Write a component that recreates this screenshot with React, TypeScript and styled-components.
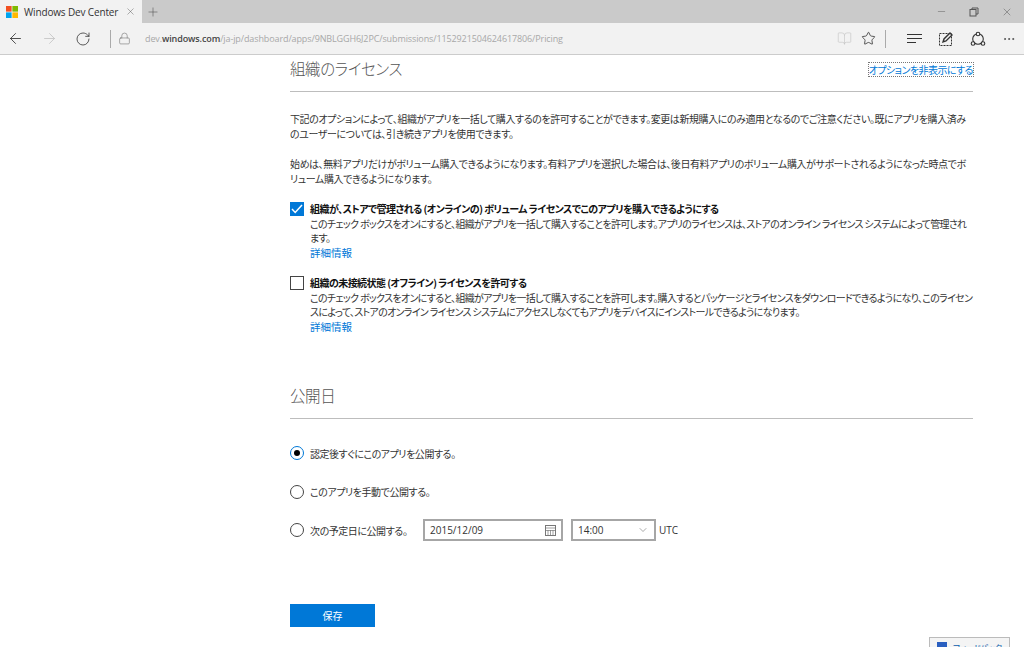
import React from 'react';
import styled, { createGlobalStyle } from 'styled-components';
import { ArrowLeft, ArrowRight, RotateCw, Lock, Star, BookOpen, X, Plus, Minus, MoreHorizontal, ChevronDown } from 'lucide-react';

const GlobalStyle = createGlobalStyle`
  html, body {
    margin: 0;
    height: 100%;
    overflow: hidden;
    background: #fff;
  }
  body {
    font-family: "Noto Sans CJK JP", "Open Sans", sans-serif;
    font-feature-settings: "palt";
    font-size: 10px;
    letter-spacing: -0.45px;
    color: #222;
  }
`;

// Browser chrome
const TabStrip = styled.div`
  display: flex;
  align-items: stretch;
  height: 23px;
  background: #cacaca;
`;
const Tab = styled.div`
  display: flex;
  align-items: center;
  width: 142px;
  box-sizing: border-box;
  padding: 0 6px 0 6px;
  background: #f2f2f2;
  font-family: "Open Sans", sans-serif;
  font-size: 10px;
  letter-spacing: -0.15px;
  color: #333;
`;
const TabTitle = styled.span`
  flex: 1;
  margin-left: 6px;
  white-space: nowrap;
`;
const NewTab = styled.div`
  display: flex;
  align-items: center;
  margin-left: 4px;
  color: #555;
`;
const WindowButtons = styled.div`
  display: flex;
  align-items: center;
  gap: 22px;
  margin-left: auto;
  padding-right: 11px;
  color: #555;
`;
const Toolbar = styled.div`
  display: flex;
  align-items: center;
  height: 32px;
  box-sizing: border-box;
  padding: 0 8px 0 7px;
  background: #f2f2f2;
  border-bottom: 1px solid #ccc;
`;
const NavIcons = styled.div`
  display: flex;
  align-items: center;
  gap: 17px;
  color: #333;
`;
const NavDivider = styled.span`
  width: 1px;
  height: 18px;
  margin: 0 7px 0 19px;
  background: #aaa;
`;
const Address = styled.div`
  flex: 1;
  margin-left: 14px;
  font-family: "Open Sans", sans-serif;
  font-size: 9px;
  letter-spacing: -0.11px;
  color: #a8a8a8;
  white-space: nowrap;
  b {
    font-weight: 600;
    color: #444;
  }
`;
const PageTools = styled.div`
  display: flex;
  align-items: center;
  gap: 9px;
  color: #333;
`;
const ToolDivider = styled.span`
  width: 1px;
  height: 18px;
  background: #aaa;
`;
const AppTools = styled.div`
  display: flex;
  align-items: center;
  gap: 16px;
  margin-left: 21px;
  color: #333;
`;
const Faded = styled.span`
  display: flex;
  color: #c4c4c4;
`;

// Page
const Main = styled.main`
  margin: 0 51px 0 290px;
`;
const SectionHead = styled.div`
  display: flex;
  justify-content: space-between;
  align-items: flex-end;
  height: 37px;
  box-sizing: border-box;
  padding-bottom: 11px;
  border-bottom: 1px solid #bdbdbd;
`;
const SectionTitle = styled.h2`
  margin: 0;
  font-size: 15.5px;
  font-weight: 300;
  line-height: 24px;
  letter-spacing: -0.4px;
  color: #555;
`;
const HideLink = styled.a`
  margin-bottom: 4px;
  outline: 1px dotted #777;
  letter-spacing: -0.55px;
  line-height: 13px;
  color: #0078d7;
`;
const Intro = styled.div`
  padding-top: 20px;
`;
const Para = styled.p`
  margin: 0 0 16px;
  line-height: 14.5px;
  letter-spacing: -0.42px;
  white-space: nowrap;
  color: #333;
`;
const Option = styled.div`
  display: flex;
  gap: 6px;
  margin-bottom: 16px;
`;
const CheckBox = styled.span<{ $on?: boolean }>`
  flex: none;
  display: flex;
  align-items: center;
  justify-content: center;
  width: 14px;
  height: 14px;
  box-sizing: border-box;
  border: ${p => (p.$on ? '0' : '1.5px solid #444')};
  background: ${p => (p.$on ? '#0078d7' : '#fff')};
`;
const OptionBody = styled.div`
  line-height: 14.5px;
  letter-spacing: -0.68px;
  white-space: nowrap;
  color: #333;
`;
const OptionTitle = styled.div`
  font-weight: 700;
  letter-spacing: -0.55px;
  color: #111;
`;
const MoreLink = styled.a`
  display: block;
  font-size: 10.5px;
  letter-spacing: 0;
  color: #0078d7;
`;
const PublishSection = styled.section`
  padding-top: 32px;
`;
const RadioList = styled.div`
  display: flex;
  flex-direction: column;
  gap: 16.5px;
  padding-top: 23px;
`;
const RadioRow = styled.div`
  display: flex;
  align-items: center;
  height: 22px;
  color: #333;
`;
const Radio = styled.span<{ $on?: boolean }>`
  flex: none;
  display: flex;
  align-items: center;
  justify-content: center;
  width: 14px;
  height: 14px;
  box-sizing: border-box;
  margin-right: 6px;
  border-radius: 50%;
  border: 1.5px solid ${p => (p.$on ? '#0078d7' : '#444')};
  &::after {
    content: '';
    display: ${p => (p.$on ? 'block' : 'none')};
    width: 6px;
    height: 6px;
    border-radius: 50%;
    background: #000;
  }
`;
const DateLabel = styled.span`
  width: 113px;
`;
const Field = styled.div<{ $w: number }>`
  display: flex;
  align-items: center;
  justify-content: space-between;
  width: ${p => p.$w}px;
  height: 22px;
  box-sizing: border-box;
  padding: 0 5px;
  border: 2px solid #a6a6a6;
  font-family: "Open Sans", sans-serif;
  font-size: 10px;
  letter-spacing: 0;
  color: #333;
`;
const DateField = styled(Field)`
  margin-right: 8px;
`;
const Utc = styled.span`
  margin-left: 3px;
  font-family: "Open Sans", sans-serif;
  font-size: 10px;
  letter-spacing: 0;
  color: #333;
`;
const SaveButton = styled.button`
  display: block;
  width: 85px;
  height: 23px;
  margin-top: 63px;
  padding: 0;
  border: 0;
  background: #0078d7;
  color: #fff;
  font: inherit;
`;
const Feedback = styled.div`
  position: fixed;
  left: 929px;
  top: 637px;
  display: flex;
  align-items: flex-start;
  gap: 6px;
  width: 81px;
  height: 20px;
  box-sizing: border-box;
  padding: 4px 7px 0;
  background: #f4f4f4;
  border: 1px solid #bbb;
  font-size: 8.5px;
  line-height: 10px;
  letter-spacing: -0.3px;
  color: #0b5cad;
  white-space: nowrap;
`;
const FeedbackIcon = styled.span`
  flex: none;
  width: 10px;
  height: 8px;
  background: #2a5fc0;
`;

const WinLogo = () => (
  <svg width="12" height="12" viewBox="0 0 16 16">
    <rect x="0" y="0" width="7.5" height="7.5" fill="#f25022" />
    <rect x="8.5" y="0" width="7.5" height="7.5" fill="#7fba00" />
    <rect x="0" y="8.5" width="7.5" height="7.5" fill="#00a4ef" />
    <rect x="8.5" y="8.5" width="7.5" height="7.5" fill="#ffb900" />
  </svg>
);

const RestoreIcon = () => (
  <svg width="10" height="10" viewBox="0 0 10 10" fill="none" stroke="currentColor">
    <rect x="1" y="2.5" width="6" height="6.5" />
    <path d="M3 2.5V1h6v6H7" />
  </svg>
);

const HubIcon = () => (
  <svg width="15" height="12" viewBox="0 0 15 12" fill="none" stroke="#333" strokeWidth="1.2">
    <path d="M0 1.5h15M0 5.5h15M0 9.5h9" />
  </svg>
);

const NoteIcon = () => (
  <svg width="16" height="16" viewBox="0 0 16 16" fill="none" stroke="#333">
    <rect x="1.5" y="2.5" width="12" height="12" strokeDasharray="2 1" />
    <path d="M5 11l1-3 6-6 2 2-6 6z" fill="#f2f2f2" strokeWidth="1.4" />
  </svg>
);

const ShareIcon = () => (
  <svg width="16" height="16" viewBox="0 0 16 16" fill="none" stroke="#333" strokeWidth="1.1">
    <circle cx="8" cy="8" r="5.3" />
    <circle cx="8" cy="3" r="1.8" fill="#f2f2f2" />
    <circle cx="3" cy="12.5" r="1.8" fill="#f2f2f2" />
    <circle cx="13" cy="12.5" r="1.8" fill="#f2f2f2" />
  </svg>
);

const CalendarIcon = () => (
  <svg width="11" height="11" viewBox="0 0 11 11" fill="none" stroke="#777">
    <rect x="0.5" y="0.5" width="10" height="10" />
    <path d="M0.5 3h10M3 5v5.5M5.5 5v5.5M8 5v5.5M0.5 5.5h10" strokeWidth="0.7" />
  </svg>
);

const Tick = () => (
  <svg width="12" height="10" viewBox="0 0 12 10" fill="none" stroke="#fff" strokeWidth="1.5">
    <path d="M1 5l3.2 3.4L11 1" />
  </svg>
);

export default function App() {
  return (
    <>
      <GlobalStyle />
      <TabStrip>
        <Tab>
          <WinLogo />
          <TabTitle>Windows Dev Center</TabTitle>
          <X size={11} strokeWidth={1} color="#555" />
        </Tab>
        <NewTab><Plus size={14} strokeWidth={1} /></NewTab>
        <WindowButtons>
          <Minus size={11} strokeWidth={1} />
          <RestoreIcon />
          <X size={12} strokeWidth={1} />
        </WindowButtons>
      </TabStrip>
      <Toolbar>
        <NavIcons>
          <ArrowLeft size={17} strokeWidth={1.2} />
          <Faded><ArrowRight size={17} strokeWidth={1.2} /></Faded>
          <RotateCw size={16} strokeWidth={1.2} />
        </NavIcons>
        <NavDivider />
        <Lock size={13} strokeWidth={1} color="#666" />
        <Address>
          dev.<b>windows.com</b>/ja-jp/dashboard/apps/9NBLGGH6J2PC/submissions/1152921504624617806/Pricing
        </Address>
        <PageTools>
          <Faded><BookOpen size={15} strokeWidth={1} /></Faded>
          <Star size={15} strokeWidth={1.3} />
          <ToolDivider />
        </PageTools>
        <AppTools>
          <HubIcon />
          <NoteIcon />
          <ShareIcon />
          <MoreHorizontal size={14} strokeWidth={1.2} />
        </AppTools>
      </Toolbar>

      <Main>
        <section>
          <SectionHead>
            <SectionTitle>組織のライセンス</SectionTitle>
            <HideLink>オプションを非表示にする</HideLink>
          </SectionHead>
          <Intro>
            <Para>
              下記のオプションによって、組織がアプリを一括して購入するのを許可することができます。変更は新規購入にのみ適用となるのでご注意ください。既にアプリを購入済み<br />
              のユーザーについては、引き続きアプリを使用できます。
            </Para>
            <Para>
              始めは、無料アプリだけがボリューム購入できるようになります。有料アプリを選択した場合は、後日有料アプリのボリューム購入がサポートされるようになった時点でボ<br />
              リューム購入できるようになります。
            </Para>
          </Intro>
          <Option>
            <CheckBox $on><Tick /></CheckBox>
            <OptionBody>
              <OptionTitle>組織が、ストアで管理される (オンラインの) ボリューム ライセンスでこのアプリを購入できるようにする</OptionTitle>
              このチェック ボックスをオンにすると、組織がアプリを一括して購入することを許可します。アプリのライセンスは、ストアのオンライン ライセンス システムによって管理され<br />
              ます。
              <MoreLink>詳細情報</MoreLink>
            </OptionBody>
          </Option>
          <Option>
            <CheckBox />
            <OptionBody>
              <OptionTitle>組織の未接続状態 (オフライン) ライセンスを許可する</OptionTitle>
              このチェック ボックスをオンにすると、組織がアプリを一括して購入することを許可します。購入するとパッケージとライセンスをダウンロードできるようになり、このライセン<br />
              スによって、ストアのオンライン ライセンス システムにアクセスしなくてもアプリをデバイスにインストールできるようになります。
              <MoreLink>詳細情報</MoreLink>
            </OptionBody>
          </Option>
        </section>

        <PublishSection>
          <SectionHead>
            <SectionTitle>公開日</SectionTitle>
          </SectionHead>
          <RadioList>
            <RadioRow><Radio $on />認定後すぐにこのアプリを公開する。</RadioRow>
            <RadioRow><Radio />このアプリを手動で公開する。</RadioRow>
            <RadioRow>
              <Radio />
              <DateLabel>次の予定日に公開する。</DateLabel>
              <DateField $w={140}>2015/12/09<CalendarIcon /></DateField>
              <Field $w={85}>14:00<ChevronDown size={12} strokeWidth={1} color="#555" /></Field>
              <Utc>UTC</Utc>
            </RadioRow>
          </RadioList>
          <SaveButton>保存</SaveButton>
        </PublishSection>
      </Main>

      <Feedback><FeedbackIcon />フィードバック</Feedback>
    </>
  );
}
